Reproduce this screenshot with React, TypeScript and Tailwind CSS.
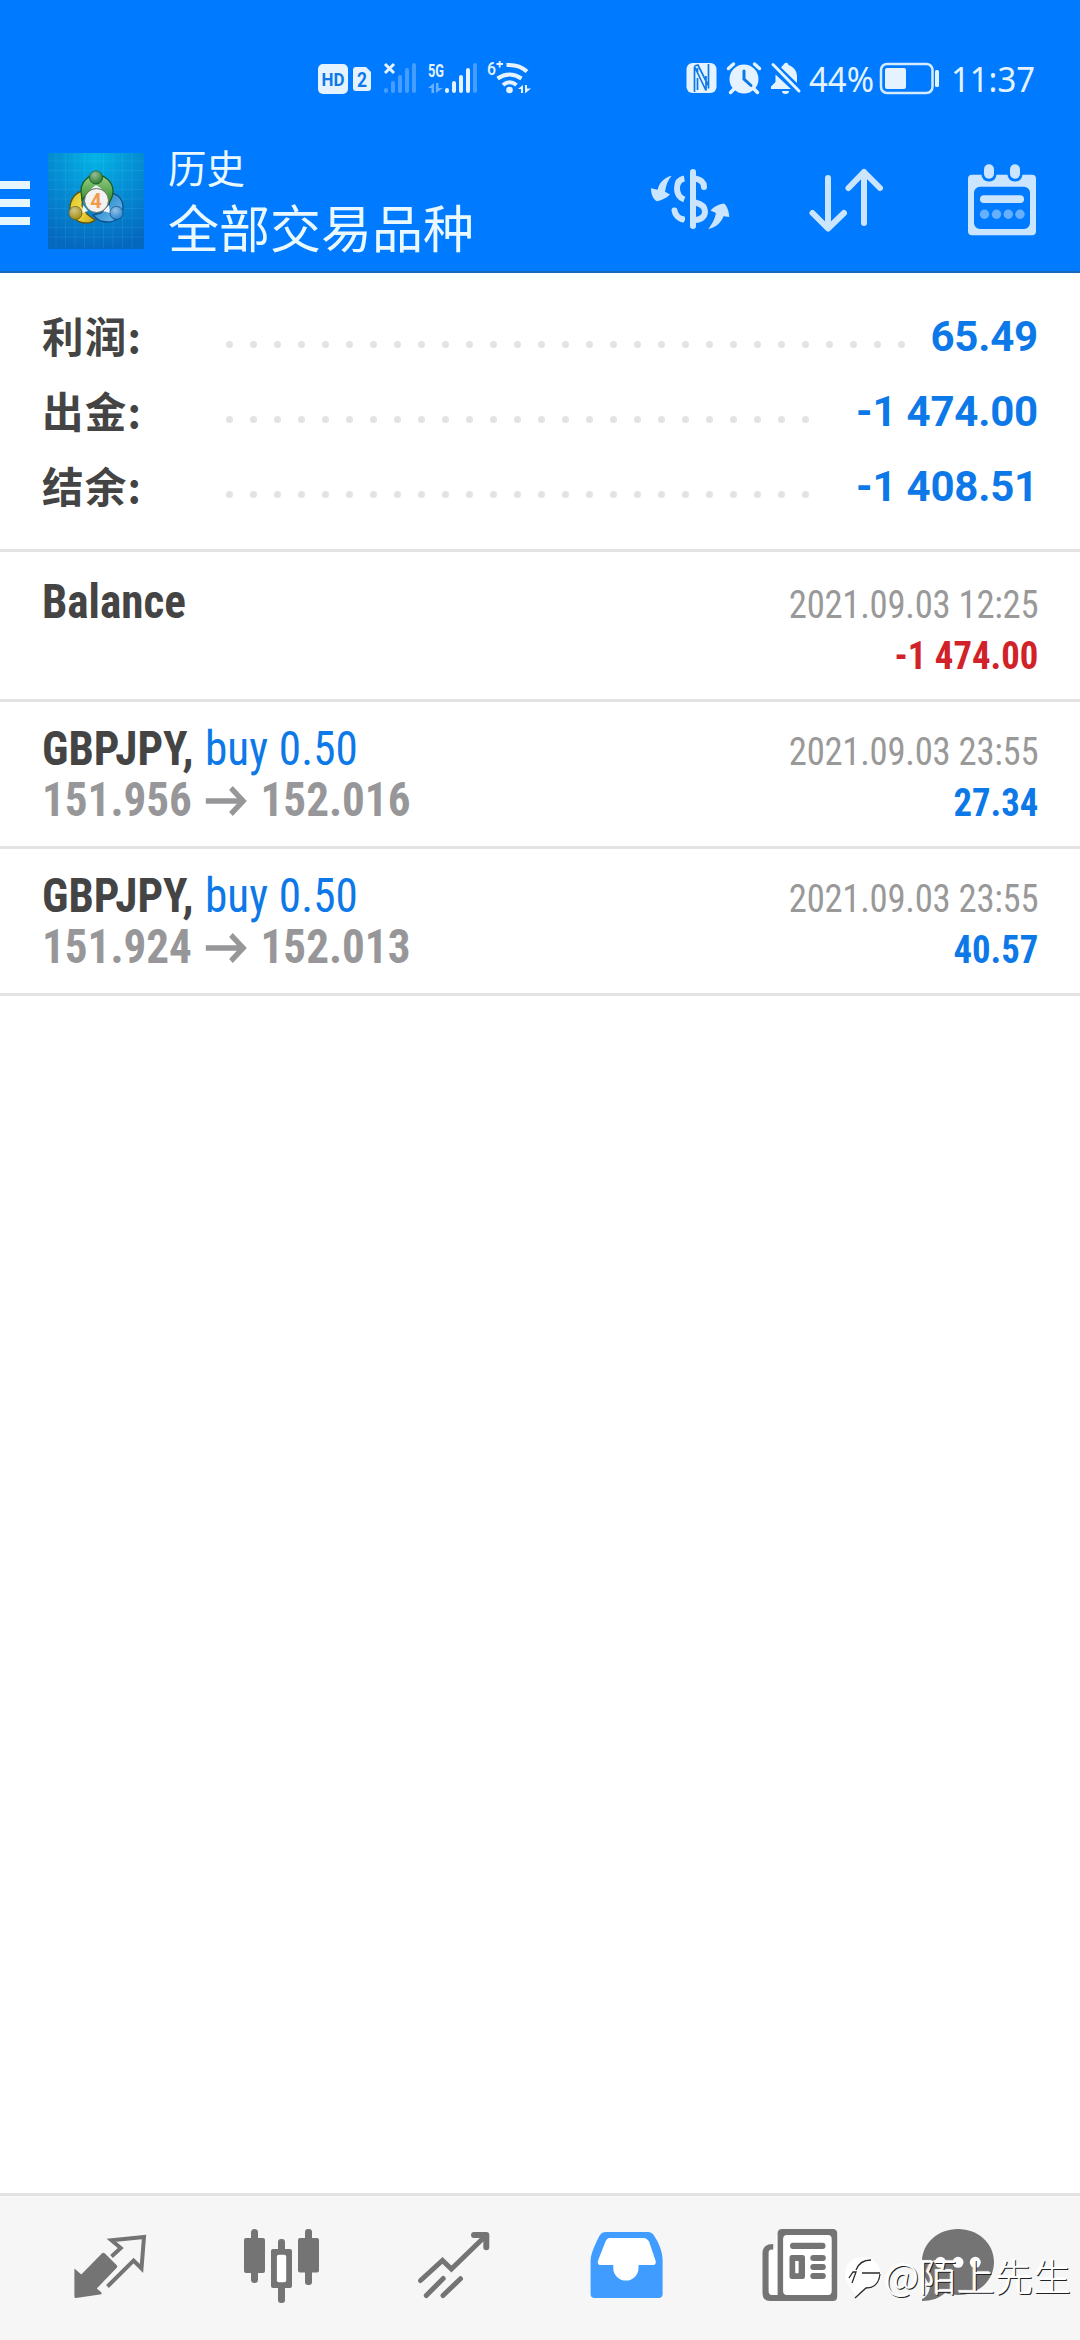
const summary = [
  { label: "利润:", value: "65.49", dots: 29 },
  { label: "出金:", value: "-1 474.00", dots: 25 },
  { label: "结余:", value: "-1 408.51", dots: 25 },
];

const deals = [
  {
    symbol: "Balance",
    side: null,
    open: null,
    close: null,
    time: "2021.09.03 12:25",
    profit: "-1 474.00",
    height: "h-[150px]",
    color: "text-[#d02228]",
  },
  {
    symbol: "GBPJPY,",
    side: "buy 0.50",
    open: "151.956",
    close: "152.016",
    time: "2021.09.03 23:55",
    profit: "27.34",
    height: "h-[147px]",
    color: "text-[#0d78e8]",
  },
  {
    symbol: "GBPJPY,",
    side: "buy 0.50",
    open: "151.924",
    close: "152.013",
    time: "2021.09.03 23:55",
    profit: "40.57",
    height: "h-[147px]",
    color: "text-[#0d78e8]",
  },
];

const StatusBar = () => (
  <div className="flex h-[130px] pt-[52px] font-['Noto_Sans','Noto_Sans_CJK_SC',sans-serif] text-[#e8f5ff]">
    <svg width="800" height="54" viewBox="0 52 800 54" fill="#e4f3ff" className="shrink-0">
      <rect x="318" y="64" width="30" height="30" rx="5" />
      <text x="333" y="86" fontSize="18.500" fontWeight="700" textAnchor="middle" fill="#0d78e8" fontFamily="Roboto" textLength="23" lengthAdjust="spacingAndGlyphs">HD</text>
      <path d="M356 67h10l5 5v16a3 3 0 0 1-3 3h-12a3 3 0 0 1-3-3v-18a3 3 0 0 1 3-3z" />
      <text x="362" y="87" fontSize="21" fontWeight="700" textAnchor="middle" fill="#0d78e8" fontFamily="Roboto" textLength="10" lengthAdjust="spacingAndGlyphs">2</text>
      <path d="M385 64l9 9M394 64l-9 9" stroke="#e4f3ff" strokeWidth="3" />
      <g stroke="#e4f3ff" strokeWidth="4" strokeLinecap="round">
        <path opacity=".3" d="M386 90v1M393 83v8M400 77v14M407 70v21M414 65v26" />
        <path d="M447 90v1M454 83v8M461 77v14M468 70v21" />
        <path opacity=".3" d="M475 65v26" />
      </g>
      <text x="428" y="77" fontSize="19" fontWeight="700" fontFamily="Roboto" textLength="16" lengthAdjust="spacingAndGlyphs">5G</text>
      <path opacity=".45" d="M428 88l6-5v10h-2.500v-5zM436 83h2.500v5h4.500l-7 5z" />
      <text x="487" y="75" fontSize="19" fontWeight="500" fontFamily="Roboto" textLength="9" lengthAdjust="spacingAndGlyphs">6</text>
      <path d="M496.500 64h6.500M499.700 61v6.500" stroke="#e4f3ff" strokeWidth="1.800" />
      <g fill="none" stroke="#e4f3ff" strokeWidth="4">
        <path d="M506.500 65Q519 64 527 71.500" />
        <path d="M497.500 78.500Q509.500 70.500 521.500 78.500" />
        <path d="M503 85Q509.500 79.500 516.500 85" />
      </g>
      <circle cx="509.500" cy="90" r="3.300" />
      <path d="M518 89l5-4v8h-2v-4zM525 85h2v3.500h4l-6 5z" />
      <rect x="686.500" y="63" width="30" height="30" rx="6" />
      <path d="M694.500 92V66.500l11.500 24V76M697.500 68v4M708.500 64v24.500M694.500 66l3.500-1 10 20M697.500 78v12" fill="none" stroke="#0d78e8" strokeWidth="1.700" />
      <circle cx="744" cy="79" r="14.500" />
      <path d="M728.500 68.500l5-4.500M759.500 68.500l-5-4.500M735 88l-4.500 4.500M753 88l4.500 4.500" stroke="#e4f3ff" strokeWidth="3.500" strokeLinecap="round" />
      <path d="M744 71v8l7 6.500" fill="none" stroke="#0d78e8" strokeWidth="3" strokeLinecap="round" />
      <path d="M785 63a2.500 2.500 0 0 1 3.500 2c5 1.800 8.500 6 8.500 11v7l-16-15.500zM775.500 74.500L791 89h-20v-2.500l4.500-4.500zM782 91h7a3.500 3 0 0 1-7 0z" />
    </svg>
    <svg width="280" height="54" viewBox="770 52 280 54" fill="#e4f3ff" className="-ml-[30px] shrink-0">
      <path d="M773 64.500L799 91" stroke="#e4f3ff" strokeWidth="3" strokeLinecap="round" />
      <text x="809" y="92" fontSize="35" textLength="65" lengthAdjust="spacingAndGlyphs">44%</text>
      <rect x="881" y="64" width="51.500" height="29" rx="6" fill="none" stroke="#d4eaff" strokeWidth="2.500" />
      <rect x="885" y="68" width="21" height="21" rx="2" />
      <rect x="935" y="70" width="4" height="17" rx="1.500" />
      <text x="951" y="92" fontSize="35" textLength="84" lengthAdjust="spacingAndGlyphs">11:37</text>
    </svg>
  </div>
);

const AppLogo = () => (
  <svg viewBox="0 0 96 96" className="ml-[18px] size-24 shrink-0">
    <defs>
      <radialGradient id="sky" cx="50%" cy="5%" r="95%">
        <stop offset="0" stopColor="#04b4e6" />
        <stop offset=".45" stopColor="#058fd4" />
        <stop offset="1" stopColor="#0568bf" />
      </radialGradient>
      <linearGradient id="green" x2="0" y2="1">
        <stop offset="0" stopColor="#9ccf86" />
        <stop offset="1" stopColor="#2b8a2d" />
      </linearGradient>
      <linearGradient id="yellow" x2="1" y2="1">
        <stop offset="0" stopColor="#d9bb1c" />
        <stop offset=".5" stopColor="#f5e04a" />
        <stop offset="1" stopColor="#c9a513" />
      </linearGradient>
      <linearGradient id="azure" x2="1" y2="1">
        <stop offset="0" stopColor="#1877c0" />
        <stop offset="1" stopColor="#6fc0f0" />
      </linearGradient>
      <radialGradient id="ball" cx="40%" cy="30%" r="70%">
        <stop offset="0" stopColor="#fff" stopOpacity=".5" />
        <stop offset="1" stopColor="#fff" stopOpacity="0" />
      </radialGradient>
    </defs>
    <rect width="96" height="96" fill="url(#sky)" />
    <path d="M8 0v96M17.500 0v96M27 0v96M36.500 0v96M46 0v96M55.500 0v96M65 0v96M74.500 0v96M84 0v96M0 8h96M0 17.500h96M0 27h96M0 36.500h96M0 46h96M0 55.500h96M0 65h96M0 74.500h96M0 84h96" stroke="#7fe0ff" strokeOpacity=".1" />
    <path d="M35 38c-7 1-13 8-13 17 0 8 7 15 16 15 4 0 7-1 9-3l-8-6-5-8z" fill="url(#yellow)" stroke="#5c5614" strokeWidth="1.300" />
    <path d="M61 40c9 0 14 7 14 14 0 9-7 15-16 15-6 0-11-3-14-7l8-2 8-8z" fill="url(#azure)" stroke="#0f4f8d" strokeWidth="1.300" />
    <path d="M33 38c0-9 7-16 15.500-16S65 29 65 38c0 6-2 9-4 12l-5-9-8-4-8 3-6 7z" fill="url(#green)" stroke="#175c20" strokeWidth="1.300" />
    <path d="M43 36l5-4 6 4zM35 52l-1 8 6-2zM61 52l1 8-7-2z" fill="#eef6ff" />
    <circle cx="48" cy="24.500" r="6.500" fill="#2d7d2e" stroke="#175c20" />
    <circle cx="48" cy="24.500" r="6.500" fill="url(#ball)" />
    <circle cx="27.500" cy="60" r="6.500" fill="#a58d14" stroke="#6b6417" />
    <circle cx="27.500" cy="60" r="6.500" fill="url(#ball)" />
    <circle cx="68.500" cy="60" r="6.500" fill="#2a86cf" stroke="#0f4f8d" />
    <circle cx="68.500" cy="60" r="6.500" fill="url(#ball)" />
    <circle cx="48.500" cy="47.500" r="12" fill="#f2f2f2" stroke="#6c7059" />
    <text x="48" y="54.500" fontSize="20" fontWeight="700" fontFamily="Roboto" textAnchor="middle" fill="#f29a4a">4</text>
  </svg>
);

const Toolbar = () => (
  <div className="flex flex-1 border-b-2 border-[#1a68bd]">
    <div className="mt-[51px] flex h-11 w-[30px] shrink-0 flex-col gap-2.5">
      <span className="h-2 bg-[#e6f6ff]" />
      <span className="h-2 bg-[#e6f6ff]" />
      <span className="h-2 bg-[#e6f6ff]" />
    </div>
    <div className="mt-[23px] flex">
      <AppLogo />
    </div>
    <div className="ml-6 flex-1 font-['Noto_Sans_CJK_SC',sans-serif] text-[#eaf8ff]">
      <p className="mt-[6px] text-[38.500px] leading-[60px]">历史</p>
      <p className="text-[51px] leading-[60px] whitespace-nowrap">全部交易品种</p>
    </div>
    <div className="mt-[22px] flex w-[468px] justify-around text-[#cce5ff]">
      <svg viewBox="0 0 96 96" className="size-24" fill="currentColor">
        <rect x="48" y="17" width="6" height="60" rx="3" />
        <path d="M42.300 26.500C36.500 27.500 35 32 35 36.500S37 45.500 42.300 47.500" fill="none" stroke="currentColor" strokeWidth="6" />
        <path d="M53 26.500C59 27.500 62 30 62 35M32.500 58.500C33 63 37 66.500 40 67.200" fill="none" stroke="currentColor" strokeWidth="6" strokeLinecap="round" />
        <path d="M39 67l3.300.5M53 50.500C60 52 63 55 63 59.500S60 67.500 53 68" fill="none" stroke="currentColor" strokeWidth="6" />
        <path d="M29.700 23.700C22 25.500 17 31 15.700 37.800L9 36.300C9 42 11 47 14.700 49.300C19 48.500 24 46.500 28 42.500L23 39.700C24 33 26 28 29.700 23.700z" />
        <path d="M66.300 77C74 75 79 71 81.500 64.200L87.300 65C87 59 85 54 82 51.500C77 52 72 54.500 68.500 58.500L74 61C73 67 70 72 66.300 77z" />
      </svg>
      <svg viewBox="0 0 96 96" className="size-24" fill="none" stroke="currentColor" strokeWidth="6" strokeLinecap="round" strokeLinejoin="round">
        <path d="M30 26v50M14.500 61L30 76.500L46 61" />
        <path d="M66 71V20M50.500 36L66 20L82 36" />
      </svg>
      <svg viewBox="0 0 96 96" className="size-24">
        <path fillRule="evenodd" fill="currentColor" d="M18 22.700h60a4 4 0 0 1 4 4v52.600a4 4 0 0 1-4 4h-60a4 4 0 0 1-4-4v-52.600a4 4 0 0 1 4-4zM26 34.700a6 6 0 0 0-6 6v30.300a6 6 0 0 0 6 6h44a6 6 0 0 0 6-6v-30.300a6 6 0 0 0-6-6z" />
        <rect x="27.500" y="10" width="15" height="19.500" rx="7" fill="#007aff" />
        <rect x="53.500" y="10" width="15" height="19.500" rx="7" fill="#007aff" />
        <rect x="30" y="12.300" width="10" height="14.500" rx="5" fill="currentColor" />
        <rect x="56" y="12.300" width="10" height="14.500" rx="5" fill="currentColor" />
        <rect x="26" y="43.300" width="44" height="7.700" rx="3.800" fill="currentColor" />
        <g fill="#66b0ff">
          <circle cx="30.500" cy="62.300" r="4.700" />
          <circle cx="42.500" cy="62.300" r="4.700" />
          <circle cx="54.300" cy="62.300" r="4.700" />
          <circle cx="66" cy="62.300" r="4.700" />
        </g>
      </svg>
    </div>
  </div>
);

const Arrow = () => (
  <svg width="45" height="30" viewBox="0 0 45 30" fill="none" stroke="currentColor" strokeWidth="5.500" className="mt-[3px]">
    <path d="M0 15h40M27 2l13 13-13 13" />
  </svg>
);

const TabBar = () => (
  <nav className="flex h-[147px] justify-around border-t-[3px] border-[#e2e2e2] bg-[#f6f6f6] px-6 pt-6 text-[#747474]">
    <svg viewBox="0 0 96 96" className="size-24" fill="none" stroke="currentColor" strokeWidth="4">
      <path fill="currentColor" stroke="none" d="M12.400 48.500L19.300 54.500L39.800 33.500Q41.300 32 43 33.500L54.500 45Q56 46.500 54.500 48L34.800 68.500L39.500 72.500V74.300L14 78Q12.400 78 12.400 76.500z" />
      <path d="M49.500 36.500L58.700 28L49.500 20.300L82 17L79.500 48.500L71.600 40.500L45.500 66.500" />
    </svg>
    <svg viewBox="0 0 96 96" className="size-24" fill="currentColor">
      <rect x="17" y="9" width="7" height="54" rx="3.500" />
      <rect x="10" y="18" width="21" height="35" rx="2" />
      <rect x="44" y="19" width="7" height="64" rx="3" />
      <rect x="37" y="29" width="21" height="39" rx="2" />
      <rect x="42.900" y="34.700" width="9.300" height="27.500" rx="2" fill="#fff" />
      <rect x="71" y="9" width="7" height="56" rx="3" />
      <rect x="64" y="18" width="21" height="34.500" rx="2" />
    </svg>
    <svg viewBox="0 0 96 96" className="size-24" fill="none" stroke="currentColor" strokeWidth="5" strokeLinecap="round">
      <path d="M14.500 60.500L36.500 40.500L45.400 49L80 15.500" />
      <path d="M68 15h12.300v12.300" strokeWidth="6" strokeLinejoin="round" />
      <path d="M20.300 75.500L37.200 58.500M37 75.500L54.500 58.700" />
    </svg>
    <svg viewBox="0 0 96 96" className="size-24">
      <path fill="#409cff" d="M28 12H70Q74 12 76 15.500C81 23 84.600 32 84.600 40V74Q84.600 78 80.600 78H16.600Q12.600 78 12.600 74V40C12.600 34 18 22 22 15Q24 12 28 12z" />
      <path fill="#fff" d="M31.500 18H65.500Q69 18 71 21.500L77.700 41Q78.300 45 75 45H60.500V48A12.600 12.600 0 0 1 35.300 48V45H22.500Q19 45 19.900 41L27.500 21.500Q29 18 31.500 18z" />
    </svg>
    <svg viewBox="0 0 96 96" className="size-24" fill="currentColor">
      <path fill="#fff" d="M16 28h10v-13h58v63H16z" />
      <path fillRule="evenodd" d="M32 9H82.700Q87.200 9 87.200 13.500V76.500Q87.200 81 82.700 81H20Q12.500 81 12.500 73V33Q12.500 24 23.200 24V29.700Q18.600 29 18.600 33V71Q18.600 75 22 75H27.600V13.500Q27.600 9 32 9zM37 15Q33.100 15 33.100 19V71Q33.100 75 37 75H78Q81.700 75 81.700 71V19Q81.700 15 78 15z" />
      <rect x="40" y="22.700" width="35.500" height="6.300" rx="3" />
      <path fillRule="evenodd" d="M42 35h10.500a2.500 2.500 0 0 1 2.500 2.500v19a2.500 2.500 0 0 1-2.500 2.500H42a2.500 2.500 0 0 1-2.500-2.500v-19A2.500 2.500 0 0 1 42 35zM45.200 41v12.300h3.400V41z" />
      <rect x="60.300" y="35" width="15.500" height="6" rx="3" />
      <rect x="60.300" y="44" width="15.500" height="6" rx="3" />
      <rect x="60.300" y="53" width="15.500" height="6" rx="3" />
    </svg>
    <svg viewBox="0 0 96 96" className="size-24" fill="currentColor">
      <path d="M36 9C56 9 72 23 72 42S56 75 36 75C31 75 27 74 23 73C18 78 9 81 0 81V79C5 77 8 71 8 65C3 59 0 51 0 42C0 23 16 9 36 9z" />
      <circle cx="18.500" cy="42.300" r="5.500" fill="#fff" />
      <circle cx="36" cy="42.300" r="5.500" fill="#fff" />
      <circle cx="53.300" cy="42.300" r="5.500" fill="#fff" />
    </svg>
  </nav>
);

// author credit stamped over the bottom right corner
const Credit = () => (
  <div className="absolute right-[9px] bottom-[40px] flex items-center text-white">
    <svg width="40" height="46" viewBox="0 0 40 46" fill="none" className="mt-1">
      <path d="M1 23C0 11 8 3 18 3S37 10 37 21C37 31 29 35 20 35L13 43L6 33z" fill="#fff" />
      <path d="M5 24L9 18H12L8 29M12 16C15 8 20 6 27 6M18 19H36M36 20C35 30 29 34 22 34L11 44" stroke="#2b2b2b" strokeWidth="1.300" />
    </svg>
    <span className="font-['Noto_Sans_CJK_SC',sans-serif] text-[38px] leading-[50px] font-light whitespace-nowrap [text-shadow:1px_1px_0_#222,-1px_-1px_1px_#fff]">
      @陌上先生
    </span>
  </div>
);

const App = () => {
  return (
    <div className="relative flex h-[2340px] w-[1080px] flex-col overflow-hidden bg-white font-[Roboto,sans-serif]">
      <header className="flex h-[273px] shrink-0 flex-col bg-[#007aff]">
        <StatusBar />
        <Toolbar />
      </header>

      <section className="flex h-[279px] shrink-0 flex-col border-b-[3px] border-[#e3e3e3] pt-[26px]">
        {summary.map((row) => (
          <div key={row.label} className="flex h-[75px] items-center px-[42px]">
            <span className="w-[184px] pb-[3px] font-['Noto_Sans_CJK_SC',sans-serif] text-[41.500px] leading-[72px] font-bold tracking-[1.3px] text-[#444]">
              {row.label}
            </span>
            <div className="mt-[15px] flex gap-[17px]">
              {Array.from({ length: row.dots }, (_, i) => (
                <span key={i} className="size-[7px] rounded-full bg-[#e3e3e3]" />
              ))}
            </div>
            <span className="ml-auto text-[42px] leading-[75px] font-bold tracking-[-0.2px] text-[#0d78e8]">
              {row.value}
            </span>
          </div>
        ))}
      </section>

      <main className="flex-1">
        {deals.map((deal, i) => (
          <div
            key={i}
            className={`flex justify-between border-b-[3px] border-[#e3e3e3] px-[42px] font-['Roboto_Condensed',Roboto,sans-serif] [font-stretch:75%] ${deal.height} ${deal.side ? "pt-[21px]" : "pt-[24px]"}`}
          >
            <div className="origin-left scale-x-[.94] text-[48px] leading-[51px]">
              <p className="font-bold text-[#444]">
                {deal.symbol}
                {deal.side && (
                  <span className="ml-px font-normal tracking-[0.15px] text-[#0d78e8]"> {deal.side}</span>
                )}
              </p>
              {deal.open && (
                <p className="flex items-center gap-[14px] font-bold text-[#97979a]">
                  {deal.open}
                  <Arrow />
                  {deal.close}
                </p>
              )}
            </div>
            <div className="origin-right scale-x-[.93] pt-[3px] text-right text-[39.500px] leading-[51px]">
              <p className="tracking-[-0.3px] text-[#999]">{deal.time}</p>
              <p className={`font-bold ${deal.color}`}>{deal.profit}</p>
            </div>
          </div>
        ))}
      </main>

      <TabBar />
      <Credit />
    </div>
  );
};

export default App;
